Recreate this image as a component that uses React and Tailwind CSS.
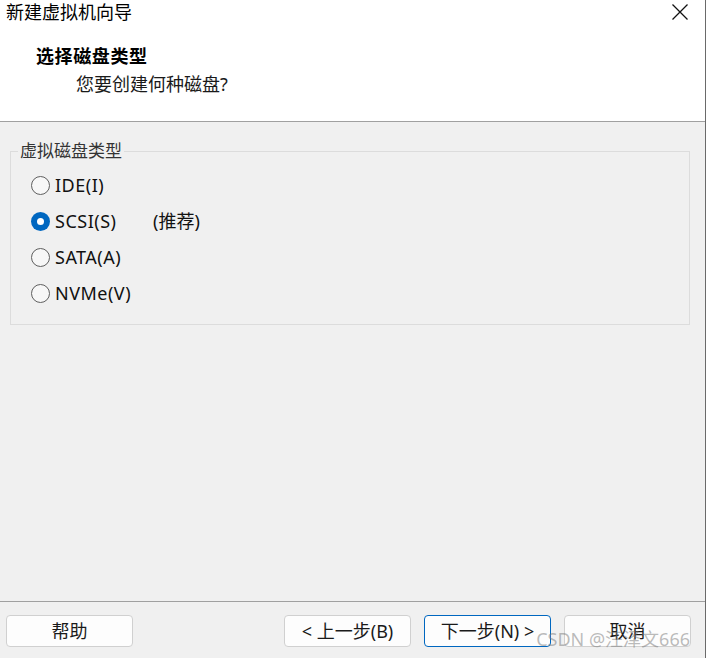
import React from "react";

const font = { fontFamily: '"Noto Sans", "Noto Sans CJK SC", sans-serif' };

function Radio({ checked, label, extra }) {
  return (
    <div className="h-[36px] flex items-center">
      {checked ? (
        <div className="w-[19px] h-[19px] rounded-full bg-[#0067c0] flex items-center justify-center">
          <div className="w-[7px] h-[7px] rounded-full bg-white" />
        </div>
      ) : (
        <div className="w-[19px] h-[19px] rounded-full border border-[#5f5f5f] bg-[#f7f7f7]" />
      )}
      <span className="ml-[5px] text-[18px] leading-[24px] tracking-[0.5px] text-[#111] w-[98px]">{label}</span>
      {extra && <span className="text-[18px] leading-[24px] text-[#111]">{extra}</span>}
    </div>
  );
}

function Btn({ children, primary }) {
  return (
    <div
      className={
        "w-[127px] h-[32px] rounded-[4px] bg-[#fdfdfd] flex items-center justify-center text-[18px] text-[#1a1a1a] border " +
        (primary ? "border-[#0067c0]" : "border-[#d0d0d0]")
      }
    >
      {children}
    </div>
  );
}

export default function App() {
  return (
    <div
      className="relative w-[706px] h-[658px] flex flex-col bg-[#f0f0f0] border-r border-[#6a6a6a]"
      style={font}
    >
      <div className="h-[122px] bg-white border-b border-[#a0a0a0] flex flex-col">
        <div className="h-[24px] flex items-center justify-between pl-[6px] pr-[17px]">
          <span className="text-[18px] text-black leading-[24px]">新建虚拟机向导</span>
          <svg width="16" height="16" viewBox="0 0 16 16">
            <path d="M0.5 0.5 L15.5 15.5 M15.5 0.5 L0.5 15.5" stroke="#111" strokeWidth="1.3" />
          </svg>
        </div>
        <div className="pl-[36px] mt-[20px] h-[24px] leading-[24px] font-bold text-[18px] tracking-[0.6px] text-black">
          选择磁盘类型
        </div>
        <div className="pl-[76px] mt-[4px] h-[24px] leading-[24px] text-[18px] text-[#1a1a1a]">
          您要创建何种磁盘?
        </div>
      </div>

      <div className="flex-1 px-[10px] pt-[19px]">
        <fieldset className="w-[680px] border border-[#dcdcdc] px-[7px] pb-[13px] pt-[6px]">
          <legend className="px-[2px] h-[20px] leading-[20px] text-[17px] text-[#333]">
            虚拟磁盘类型
          </legend>
          <div className="pl-[13px]">
            <Radio label="IDE(I)" />
            <Radio checked label="SCSI(S)" extra="(推荐)" />
            <Radio label="SATA(A)" />
            <Radio label="NVMe(V)" />
          </div>
        </fieldset>
      </div>

      <div className="h-[57px] border-t border-[#a0a0a0] pt-[13px] pl-[6px] pr-[14px] flex">
        <Btn>帮助</Btn>
        <div className="flex-1" />
        <div className="flex gap-[13px]">
          <Btn>&lt; 上一步(B)</Btn>
          <Btn primary>下一步(N) &gt;</Btn>
          <Btn>取消</Btn>
        </div>
      </div>

      <div className="absolute right-[15px] top-[626px] text-[18px] leading-[26px] text-[rgba(120,120,120,0.5)] pointer-events-none">
        CSDN @汪泽文666
      </div>
    </div>
  );
}
